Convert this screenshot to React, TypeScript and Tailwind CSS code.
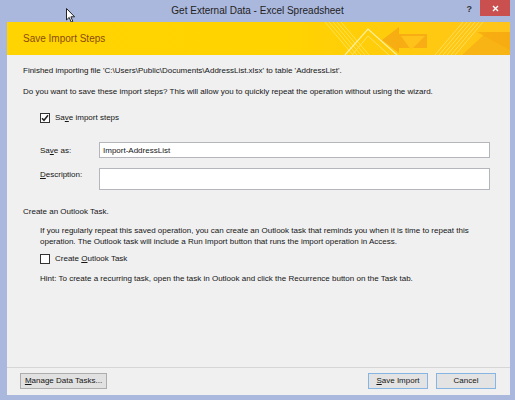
import React from "react";

const FONT = { fontFamily: '"Liberation Sans", Arial, sans-serif' };

function U({ children }: { children: React.ReactNode }) {
  return <span className="underline underline-offset-1">{children}</span>;
}

function CheckBox({ checked }: { checked?: boolean }) {
  return (
    <span className="w-[10px] h-[10px] border border-[#333] bg-white flex items-center justify-center shrink-0">
      {checked && (
        <svg width="8" height="8" viewBox="0 0 8 8">
          <path d="M1 4.2 L3 6.3 L7 1.3" fill="none" stroke="#222" strokeWidth="1.5" />
        </svg>
      )}
    </span>
  );
}

function BannerArt() {
  // decorative stripes / arrow on the right part of the yellow banner
  return (
    <svg className="absolute inset-0" width="503" height="33" viewBox="0 0 503 33" preserveAspectRatio="none">
      <defs>
        <linearGradient id="bg" x1="0" x2="1" y1="0" y2="0">
          <stop offset="0" stopColor="#ffd400" />
          <stop offset="0.55" stopColor="#ffd300" />
          <stop offset="1" stopColor="#ffc41a" />
        </linearGradient>
      </defs>
      <rect width="503" height="33" fill="url(#bg)" />
      {[0, 4, 8, 12, 16].map((o) => (
        <line key={"a" + o} x1={318 + o} y1="0" x2={346 + o} y2="33" stroke="#ffe666" strokeWidth="1" opacity="0.8" />
      ))}
      <path d="M338 33 L361 7 L390 33" fill="none" stroke="#fff0a0" strokeWidth="1.2" />
      <path d="M345 33 L361 14 L382 33" fill="none" stroke="#ffe160" strokeWidth="1" />
      <polygon points="375,18 392,5 392,12 420,12 420,26 392,26 392,31" fill="#f6a814" opacity="0.85" />
      <polygon points="394,14 418,14 404,28" fill="#ffc21a" />
      {[0, 4, 8, 12, 16, 20].map((o) => (
        <line key={"b" + o} x1={428 + o} y1="33" x2={456 + o} y2="0" stroke="#ffe670" strokeWidth="1" opacity="0.75" />
      ))}
      <polygon points="455,33 503,33 503,10 480,10" fill="#f8b414" />
      <polygon points="470,10 503,10 503,28" fill="#f6aa10" opacity="0.8" />
    </svg>
  );
}

function Cursor() {
  return (
    <svg className="absolute left-[66px] top-[8px]" width="10" height="15" viewBox="0 0 10 15">
      <path d="M0.5 0.5 L0.5 12 L3.2 9.4 L5.2 14 L6.8 13.3 L4.9 8.8 L8.6 8.8 Z" fill="#fff" stroke="#222" strokeWidth="1" strokeLinejoin="round" />
    </svg>
  );
}

export default function App() {
  return (
    <div className="w-[515px] h-[400px] bg-[#abb8de] flex flex-col relative overflow-hidden text-[#151515]" style={FONT}>
      <Cursor />
      <div className="h-[22px] grid grid-cols-[1fr_auto_1fr] items-start shrink-0">
        <div />
        <div className="text-[10px] leading-[22px] text-[#222]">Get External Data - Excel Spreadsheet</div>
        <div className="flex justify-end items-start pr-[5px]">
          <span className="text-[9px] font-bold leading-[18px] text-[#333] mr-[8px]">?</span>
          <span className="w-[30px] h-[16px] bg-[#c9504e] flex items-center justify-center">
            <svg width="7" height="7" viewBox="0 0 7 7">
              <path d="M1 1 L6 6 M6 1 L1 6" stroke="#fff" strokeWidth="1.4" />
            </svg>
          </span>
        </div>
      </div>

      <div className="flex-1 flex flex-col pl-[7px] pr-[5px] pb-[5px] min-h-0">
        <div className="relative h-[33px] shrink-0 flex items-center pl-[16px]">
          <BannerArt />
          <span className="relative text-[10px] text-[#8a4b0b]">Save Import Steps</span>
        </div>

        <div className="flex-1 bg-[#f0f0f0] flex flex-col text-[8px] leading-[11px] min-h-0">
          <div className="flex-1 flex flex-col pl-[16px] pr-[20px]">
            <p className="mt-[10px]">Finished importing file 'C:\Users\Public\Documents\AddressList.xlsx' to table 'AddressList'.</p>
            <p className="mt-[10px]">Do you want to save these import steps? This will allow you to quickly repeat the operation without using the wizard.</p>

            <label className="mt-[15px] ml-[17px] flex items-center gap-[5px]">
              <CheckBox checked />
              <span>Sa<U>v</U>e import steps</span>
            </label>

            <div className="mt-[19px] flex items-center">
              <span className="w-[76px] pl-[17px] shrink-0">Sa<U>v</U>e as:</span>
              <div className="flex-1 h-[16px] bg-white border border-[#b4b6bc] flex items-center px-[3px]">Import-AddressList</div>
            </div>

            <div className="mt-[10px] flex items-start">
              <span className="w-[76px] pl-[17px] shrink-0 pt-[1px]"><U>D</U>escription:</span>
              <div className="flex-1 h-[22px] bg-white border border-[#b4b6bc]" />
            </div>

            <p className="mt-[16px]">Create an Outlook Task.</p>
            <p className="mt-[8px] ml-[17px]">
              If you regularly repeat this saved operation, you can create an Outlook task that reminds you when it is time to repeat this
              <br />
              operation. The Outlook task will include a Run Import button that runs the import operation in Access.
            </p>

            <label className="mt-[6px] ml-[17px] flex items-center gap-[5px]">
              <CheckBox />
              <span>Create <U>O</U>utlook Task</span>
            </label>

            <p className="mt-[9px] ml-[17px]">Hint: To create a recurring task, open the task in Outlook and click the Recurrence button on the Task tab.</p>
          </div>

          <div className="h-[28px] shrink-0 border-t border-[#d6d6d6] flex items-start pt-[5px] pl-[13px] pr-[14px]">
            <button className="w-[87px] h-[16px] bg-[#e1e1e1] border border-[#adadad] text-[8px] leading-[14px]"><U>M</U>anage Data Tasks...</button>
            <div className="flex-1" />
            <button className="w-[60px] h-[16px] bg-[#e3e3e3] border border-[#86b4e3] text-[8px] leading-[14px]"><U>S</U>ave Import</button>
            <button className="ml-[8px] w-[60px] h-[16px] bg-[#e3e3e3] border border-[#86b4e3] text-[8px] leading-[14px]">Cancel</button>
          </div>
        </div>
      </div>
    </div>
  );
}
